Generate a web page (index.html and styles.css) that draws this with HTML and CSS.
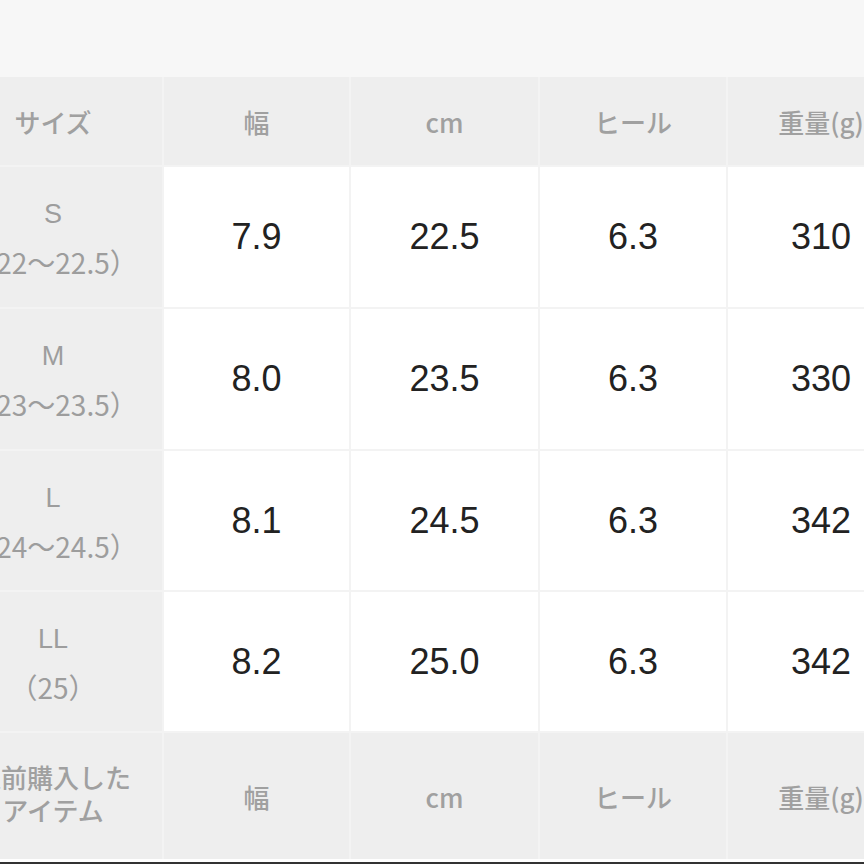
FILE: index.html
```html
<!DOCTYPE html>
<html lang="ja">
<head>
<meta charset="utf-8">
<link rel="stylesheet" href="styles.css">
</head>
<body>
<div class="top"></div>
<div class="table">
  <div class="cell head">サイズ</div>
  <div class="cell head">幅</div>
  <div class="cell head">cm</div>
  <div class="cell head">ヒール</div>
  <div class="cell head">重量(g)</div>

  <div class="cell size"><span>S</span><span>（22〜22.5）</span></div>
  <div class="cell val">7.9</div>
  <div class="cell val">22.5</div>
  <div class="cell val">6.3</div>
  <div class="cell val">310</div>

  <div class="cell size"><span>M</span><span>（23〜23.5）</span></div>
  <div class="cell val">8.0</div>
  <div class="cell val">23.5</div>
  <div class="cell val">6.3</div>
  <div class="cell val">330</div>

  <div class="cell size"><span>L</span><span>（24〜24.5）</span></div>
  <div class="cell val">8.1</div>
  <div class="cell val">24.5</div>
  <div class="cell val">6.3</div>
  <div class="cell val">342</div>

  <div class="cell size"><span>LL</span><span>（25）</span></div>
  <div class="cell val">8.2</div>
  <div class="cell val">25.0</div>
  <div class="cell val">6.3</div>
  <div class="cell val">342</div>

  <div class="cell head multi"><span>以前購入した</span><span>アイテム</span></div>
  <div class="cell head">幅</div>
  <div class="cell head">cm</div>
  <div class="cell head">ヒール</div>
  <div class="cell head">重量(g)</div>
</div>
<div class="bottom"></div>
</body>
</html>
```
FILE: styles.css
```css
html, body {
  margin: 0;
  padding: 0;
}
body {
  width: 864px;
  height: 864px;
  overflow: hidden;
  background: #f7f7f7;
  font-family: "Noto Sans CJK JP", "Liberation Sans", sans-serif;
}
.top {
  height: 77px;
  background: #f7f7f7;
}
.table {
  display: grid;
  grid-template-columns: 218px 185px 187px 186px 186px;
  grid-template-rows: 88px 140px 140px 139px 139px 126px;
  gap: 2px;
  margin-left: -56px;
  width: 990px;
  background: #f3f3f3;
}
.cell {
  display: flex;
  flex-direction: column;
  align-items: center;
  justify-content: center;
  white-space: nowrap;
}
.head {
  background: #eeeeee;
  color: #a0a0a0;
  font-size: 26px;
  font-weight: 500;
}
.size {
  background: #eeeeee;
  color: #9d9d9d;
  font-size: 28px;
  line-height: 48px;
  padding-top: 2px;
  box-sizing: border-box;
}
.size span:first-child {
  font-family: "Liberation Sans", "Noto Sans CJK JP", sans-serif;
  font-size: 27px;
}
.multi {
  font-size: 26px;
  line-height: 33px;
  padding-bottom: 6px;
  box-sizing: border-box;
}
.val {
  background: #ffffff;
  color: #222222;
  font-family: "Liberation Sans", "Noto Sans CJK JP", sans-serif;
  font-size: 36px;
}
.bottom {
  height: 3px;
  background: #ffffff;
  border-bottom: 2px solid #333333;
}
```
